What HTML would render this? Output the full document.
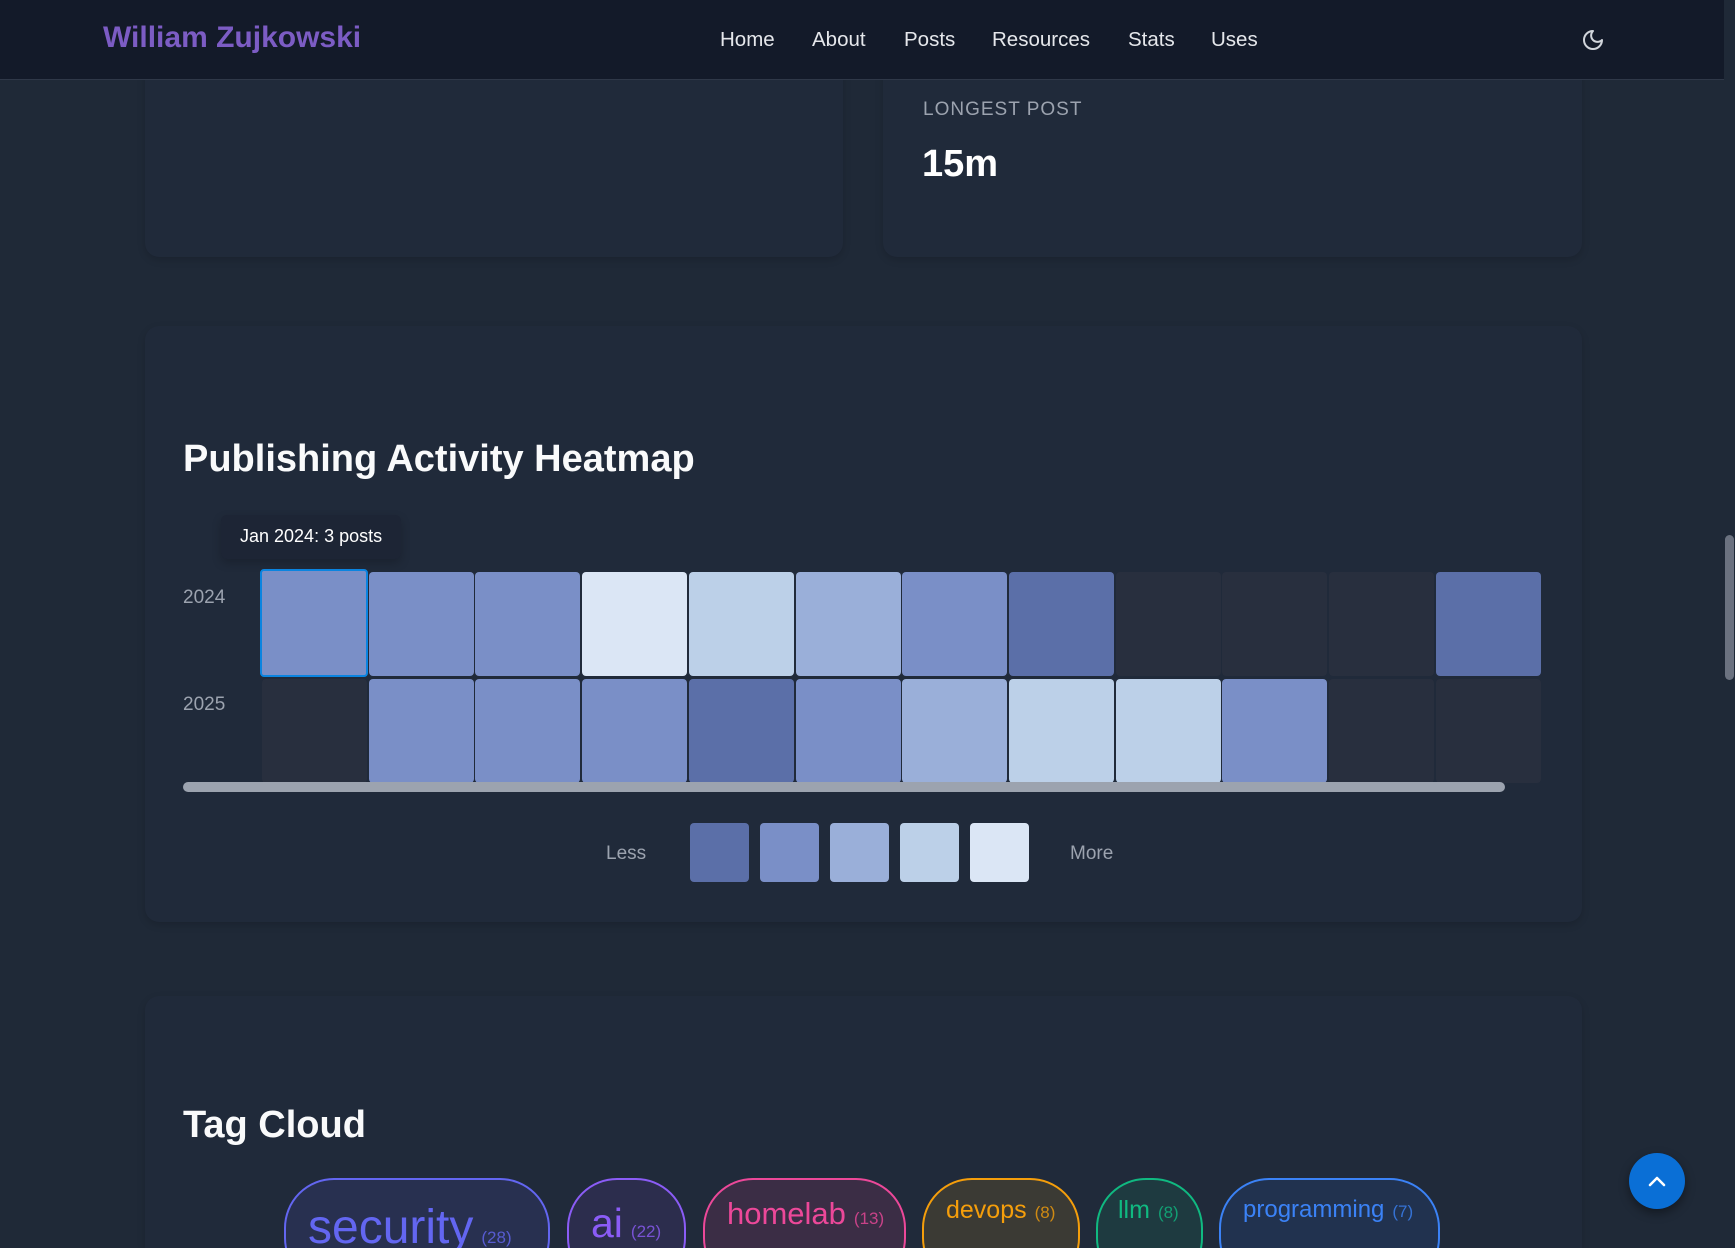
<!DOCTYPE html>
<html style="width:1735px;height:1248px;overflow:hidden"><head><meta charset="utf-8"><style>
*{margin:0;padding:0;box-sizing:border-box}
body{width:1735px;height:1248px;overflow:hidden;background:#1f2937;font-family:"Liberation Sans",sans-serif;position:relative;color:#f3f4f6}
.hdr{position:absolute;left:0;top:0;width:1724px;height:80px;background:#131a29;border-bottom:1px solid #2f3848;z-index:2}
.logo{position:absolute;left:103px;top:21px;font-size:30px;font-weight:600;color:#7c5cc4}
.nav a{position:absolute;top:28px;font-size:20.5px;color:#e5e7eb;text-decoration:none}
.card{position:absolute;background:#202a3a;border-radius:14px;box-shadow:0 3px 8px rgba(0,0,0,.15)}
.lbl{position:absolute;font-size:19px;letter-spacing:1px;color:#9ca3af}
.h2{position:absolute;font-size:38px;font-weight:700;color:#f9fafb}
.cell{position:absolute;width:105px;height:104px;border-radius:4px}
.yr{position:absolute;font-size:19px;color:#9ca3af}
.lg{position:absolute;width:59px;height:59px;border-radius:4px;top:823px}
.pill{position:absolute;top:1178px;height:110px;border:2px solid;border-radius:50px;padding-left:22px;white-space:nowrap}
.pill small{font-size:17px;opacity:.8;margin-left:8px}
</style></head><body>
<div style="position:absolute;right:0;top:0;width:11px;height:1248px;background:#1f2937"></div>
<div style="position:absolute;right:1px;top:535px;width:9px;height:145px;background:#6b7280;border-radius:5px"></div>

<div class="card" style="left:145px;top:60px;width:698px;height:197px"></div>
<div class="card" style="left:883px;top:60px;width:699px;height:197px"></div>
<div class="hdr"><div class="logo">William Zujkowski</div><div class="nav"><a style="left:720px">Home</a><a style="left:812px">About</a><a style="left:904px">Posts</a><a style="left:992px">Resources</a><a style="left:1128px">Stats</a><a style="left:1211px">Uses</a></div><svg style="position:absolute;left:1581px;top:28px" width="24" height="24" viewBox="0 0 24 24" fill="none" stroke="#d1d5db" stroke-width="2" stroke-linecap="round" stroke-linejoin="round"><path d="M12 3a6 6 0 0 0 9 9 9 9 0 1 1-9-9z"/></svg></div>
<div class="lbl" style="left:923px;top:99px">LONGEST POST</div>
<div style="position:absolute;left:922px;top:143px;font-size:38px;font-weight:700;color:#fff">15m</div>

<div class="card" style="left:145px;top:326px;width:1437px;height:596px"></div>
<div class="h2" style="left:183px;top:438px">Publishing Activity Heatmap</div>
<div style="position:absolute;left:221px;top:515px;width:180px;height:44px;background:#1d2535;border-radius:6px;box-shadow:0 4px 10px rgba(0,0,0,.2)"></div>
<div style="position:absolute;left:240px;top:526px;font-size:18px;color:#fff">Jan 2024: 3 posts</div>
<div class="yr" style="left:183px;top:587px">2024</div>
<div class="yr" style="left:183px;top:694px">2025</div>
<div id="grid"></div>
<div style="position:absolute;left:183px;top:782px;width:1322px;height:10px;background:#9ca3af;border-radius:5px"></div>
<div class="yr" style="left:606px;top:843px">Less</div>
<div class="lg" style="left:690px;background:#5b6fa8"></div>
<div class="lg" style="left:760px;background:#7a8fc7"></div>
<div class="lg" style="left:830px;background:#9aafd9"></div>
<div class="lg" style="left:900px;background:#bcd0e8"></div>
<div class="lg" style="left:970px;background:#dbe6f5"></div>
<div class="yr" style="left:1070px;top:843px">More</div>

<div class="card" style="left:145px;top:996px;width:1437px;height:252px;border-radius:14px 14px 0 0"></div>
<div class="h2" style="left:183px;top:1104px">Tag Cloud</div>
<div class="pill" style="left:284px;width:266px;border-color:#6366f1;background:#283050;color:#6366f1;font-size:48px;padding-top:20px">security<small>(28)</small></div>
<div class="pill" style="left:567px;width:119px;border-color:#8b5cf6;background:#2c2d4d;color:#8b5cf6;font-size:41px;padding-top:20px">ai<small>(22)</small></div>
<div class="pill" style="left:703px;width:203px;border-color:#ec4899;background:#3b2d45;color:#ec4899;font-size:31px;padding-top:16px">homelab<small>(13)</small></div>
<div class="pill" style="left:922px;width:158px;border-color:#f59e0b;background:#3b3a34;color:#f59e0b;font-size:25px;padding-top:16px">devops<small>(8)</small></div>
<div class="pill" style="left:1096px;width:107px;border-color:#10b981;background:#1e3a40;color:#10b981;font-size:25px;padding-top:16px;padding-left:20px">llm<small>(8)</small></div>
<div class="pill" style="left:1219px;width:221px;border-color:#3b82f6;background:#21324f;color:#3b82f6;font-size:24px;padding-top:16px">programming<small>(7)</small></div>
<div style="position:absolute;left:1629px;top:1153px;width:56px;height:56px;border-radius:50%;background:#0a6fd6;box-shadow:0 4px 10px rgba(0,0,0,.4)"><svg width="56" height="56" viewBox="0 0 56 56" fill="none" stroke="#fff" stroke-width="2.5" stroke-linecap="round" stroke-linejoin="round"><path d="M21 32l7-7 7 7"/></svg></div>
<script>
var C={E:'#282f3e',1:'#5b6fa8',2:'#7a8fc7',3:'#9aafd9',4:'#bcd0e8',5:'#dbe6f5'};
var r=[['2','2','2','5','4','3','2','1','E','E','E','1'],['E','2','2','2','1','2','3','4','4','2','E','E']];
var g='';for(var i=0;i<2;i++)for(var j=0;j<12;j++){var x=262+j*106.7,y=572+i*107;
g+='<div class="cell" style="left:'+x+'px;top:'+y+'px;background:'+C[r[i][j]]+(i==0&&j==0?';border:2px solid #0a84e0;left:260px;top:569px;width:108px;height:108px':'')+'"></div>';}
document.getElementById('grid').innerHTML=g;
</script>
</body></html>
